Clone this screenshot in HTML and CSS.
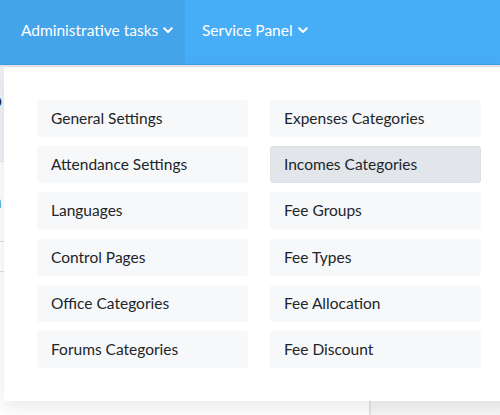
FILE: index.html
```html
<!DOCTYPE html>
<html lang="en">

<head>
    <meta charset="UTF-8">
    <meta name="viewport" content="width=device-width, initial-scale=1.0">
    <title>Administrative tasks</title>
    <link rel="stylesheet" href="styles.css">
</head>

<body>
    <nav class="topbar">
        <div class="nav-item active">Administrative tasks
            <svg class="chevron" viewBox="0 0 10 7" width="10" height="7">
                <path d="M1.2 1.2 L5 5 L8.8 1.2" fill="none" stroke="#fff" stroke-width="2" stroke-linecap="round" stroke-linejoin="round" />
            </svg>
        </div>
        <div class="nav-item">Service Panel
            <svg class="chevron" viewBox="0 0 10 7" width="10" height="7">
                <path d="M1.2 1.2 L5 5 L8.8 1.2" fill="none" stroke="#fff" stroke-width="2" stroke-linecap="round" stroke-linejoin="round" />
            </svg>
        </div>
    </nav>

    <div class="page">
        <div class="page-main">
            <div class="page-card">
                <p class="card-title">Info</p>
                <p class="card-link">Go to</p>
            </div>
            <p class="section-title">Section</p>
            <div class="row-line"></div>
            <div class="row-line"></div>
        </div>
        <div class="page-side"></div>

        <div class="dropdown">
            <div class="menu-grid">
                <a class="menu-item">General Settings</a>
                <a class="menu-item">Expenses Categories</a>
                <a class="menu-item">Attendance Settings</a>
                <a class="menu-item hover">Incomes Categories</a>
                <a class="menu-item">Languages</a>
                <a class="menu-item">Fee Groups</a>
                <a class="menu-item">Control Pages</a>
                <a class="menu-item">Fee Types</a>
                <a class="menu-item">Office Categories</a>
                <a class="menu-item">Fee Allocation</a>
                <a class="menu-item">Forums Categories</a>
                <a class="menu-item">Fee Discount</a>
            </div>
        </div>
    </div>
</body>

</html>
```

FILE: styles.css
```css
* {
    font-family: 'Lato', 'Noto Sans', sans-serif;
}

*,
*::before,
*::after {
    box-sizing: border-box;
}

body {
    margin: 0;
    background-color: #f4f5f7;
    overflow: hidden;
}

p {
    margin: 0;
}

.topbar {
    display: flex;
    height: 65px;
    background-color: #48adf7;
    border-bottom: 1px solid #3f9fe6;
}

.nav-item {
    display: flex;
    align-items: center;
    gap: 5px;
    padding: 0 15px 4px 21px;
    color: #fff;
    font-size: 15.5px;
    white-space: nowrap;
}

.nav-item + .nav-item {
    padding-left: 17px;
}

.nav-item.active {
    width: 185px;
    padding-right: 0;
    background-color: #44a4ea;
}

.chevron {
    flex-shrink: 0;
    margin-top: 1px;
}

.page {
    position: relative;
    display: flex;
    height: 350px;
    border-top: 2px solid #e3e5e8;
}

.page-main {
    width: 371px;
    border-right: 2px solid #e2e2e2;
    background-color: #fff;
}

.page-card {
    height: 95px;
    padding: 22px 0 0 0;
    background-color: #eef1f5;
    border-bottom: 1px solid #e4e7eb;
}

.card-title {
    margin-left: -30px;
    font-size: 18px;
    font-weight: 700;
    color: #1f2d3d;
}

.card-link {
    margin: 8px 0 0 -34px;
    font-size: 13px;
    color: #3d7be0;
}

.section-title {
    margin: 26px 0 0 -64px;
    font-size: 20px;
    color: #1f2d3d;
}

.row-line {
    height: 30px;
    border-bottom: 1px solid #dcdfe3;
}

.page-side {
    flex: 1;
    background-color: #f6f6f6;
}

.dropdown {
    position: absolute;
    top: 0;
    left: 4px;
    width: 510px;
    padding: 33px 33px 33px 33px;
    background-color: #fff;
    box-shadow: 0 6px 18px rgba(0, 0, 0, 0.09);
}

.menu-grid {
    display: grid;
    grid-template-columns: 211px 211px;
    column-gap: 22px;
    row-gap: 9.2px;
}

.menu-item {
    display: flex;
    align-items: center;
    height: 37px;
    padding: 0 14px 1px;
    border-radius: 3px;
    background-color: #f7f8fa;
    color: #212529;
    font-size: 15.5px;
    text-decoration: none;
}

.menu-item.hover {
    background-color: #e2e6ea;
    border: 1px solid #dcdfe3;
    padding-left: 13px;
}
```
